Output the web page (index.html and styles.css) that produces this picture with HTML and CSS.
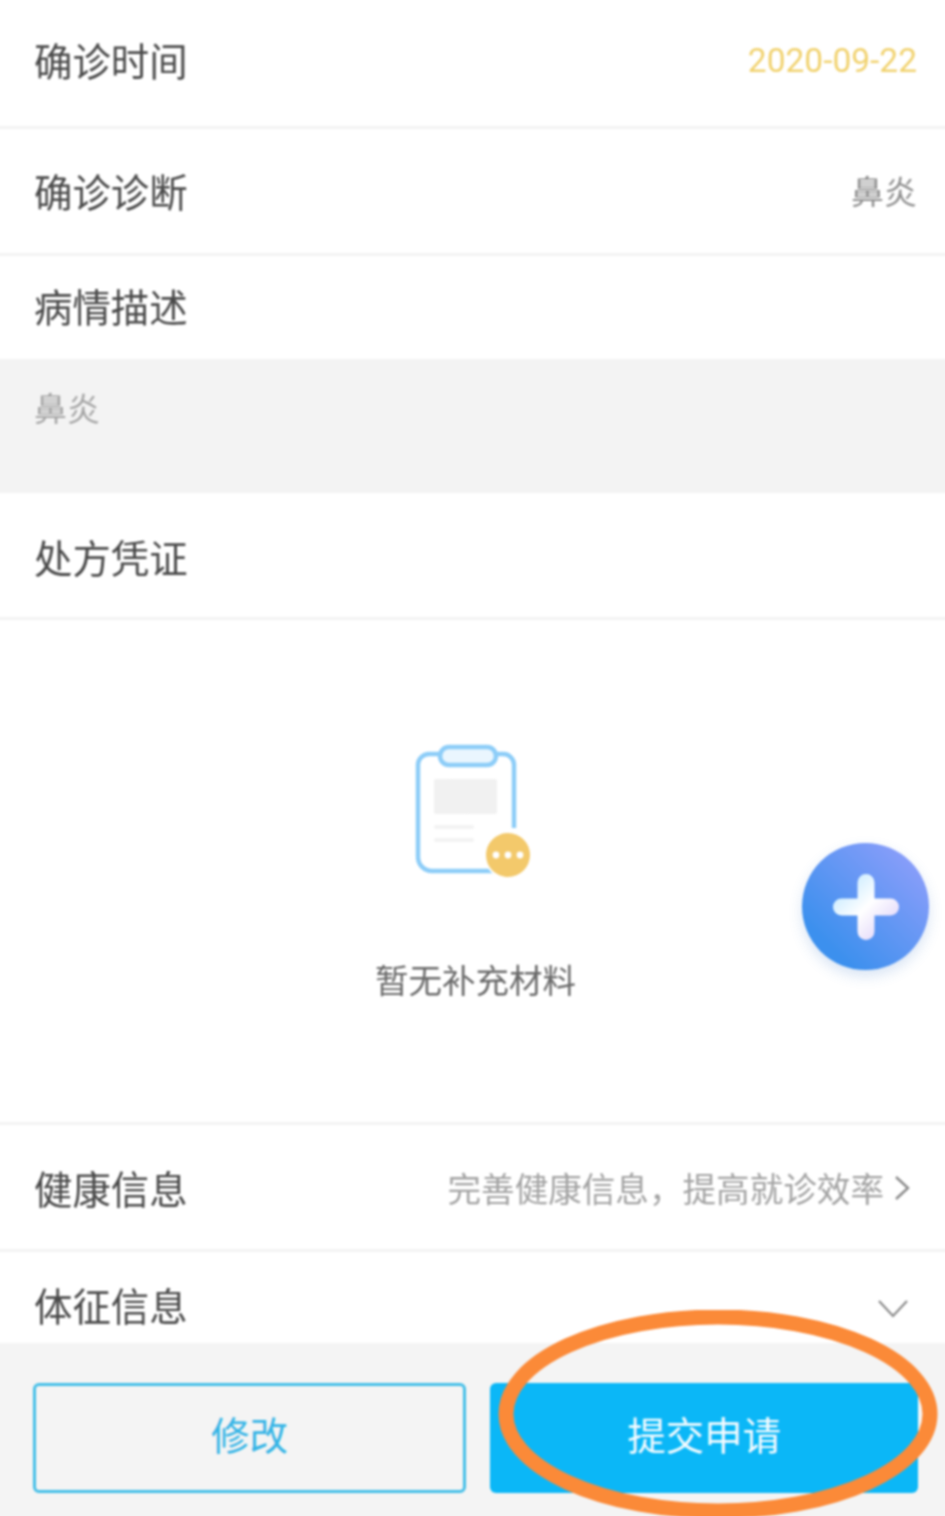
FILE: index.html
```html
<!DOCTYPE html>
<html>
<head>
    <meta charset="UTF-8">
    <meta name="viewport" content="width=device-width, initial-scale=1.0">
    <title>提交申请</title>
    <link rel="stylesheet" href="styles.css">
</head>
<body>
    <div class="page">
        <div class="row row-first">
            <span class="label">确诊时间</span>
            <span class="date">2020-09-22</span>
        </div>
        <div class="row row-second">
            <span class="label">确诊诊断</span>
            <span class="value">鼻炎</span>
        </div>
        <div class="row row-title">
            <span class="label">病情描述</span>
        </div>
        <div class="desc">鼻炎</div>
        <div class="row row-fourth">
            <span class="label">处方凭证</span>
        </div>

        <!-- Empty state -->
        <div class="empty">
            <svg class="empty-icon" width="120" height="138" viewBox="0 0 120 138">
                <path d="M24 10 H14 A11 11 0 0 0 3 21 V113 A14 14 0 0 0 17 127 H78" fill="#fff" stroke="#8dcdf8" stroke-width="4.5"/>
                <path d="M80 10 H88 A11 11 0 0 1 99 21 V84" fill="none" stroke="#8dcdf8" stroke-width="4.5"/>
                <rect x="25" y="3" width="56" height="18" rx="9" fill="#eaf6fe" stroke="#8dcdf8" stroke-width="4.5"/>
                <rect x="19" y="35" width="63" height="35" rx="2" fill="#f1f1f1"/>
                <rect x="19" y="81" width="40" height="4" rx="2" fill="#f3f3f3"/>
                <rect x="19" y="94" width="40" height="4" rx="2" fill="#f3f3f3"/>
                <circle cx="93" cy="111" r="24" fill="#fff"/>
                <circle cx="93" cy="111" r="22" fill="#f3c96b"/>
                <circle cx="81" cy="111" r="3.4" fill="#fff"/>
                <circle cx="93" cy="111" r="3.4" fill="#fff"/>
                <circle cx="105" cy="111" r="3.4" fill="#fff"/>
            </svg>
            <div class="empty-text">暂无补充材料</div>
        </div>

        <div class="row row-top">
            <span class="label">健康信息</span>
            <span class="value hint">完善健康信息，提高就诊效率
                <svg width="18" height="26" viewBox="0 0 18 26"><path d="M3 2 L15 13 L3 24" fill="none" stroke="#8a8a8a" stroke-width="2.4"/></svg>
            </span>
        </div>
        <div class="row row-last">
            <span class="label">体征信息</span>
            <svg class="chevron" width="32" height="20" viewBox="0 0 32 20"><path d="M2 2 L16 17 L30 2" fill="none" stroke="#8a8a8a" stroke-width="2.2"/></svg>
        </div>

        <div class="footer">
            <div class="btn btn-outline">修改</div>
            <div class="btn btn-fill">提交申请</div>
        </div>

        <!-- Floating add button -->
        <div class="fab">
            <svg width="68" height="68" viewBox="0 0 68 68">
                <defs>
                    <linearGradient id="plusGrad" x1="0" y1="0" x2="1" y2="1">
                        <stop offset="0.15" stop-color="#c9ebff"/>
                        <stop offset="0.5" stop-color="#ffffff"/>
                        <stop offset="0.85" stop-color="#e3d8fa"/>
                    </linearGradient>
                </defs>
                <path d="M34 1 a8.5 8.5 0 0 1 8.5 8.5 V25.5 H58.5 a8.5 8.5 0 0 1 0 17 H42.5 V58.5 a8.5 8.5 0 0 1 -17 0 V42.5 H9.5 a8.5 8.5 0 0 1 0 -17 H25.5 V9.5 a8.5 8.5 0 0 1 8.5 -8.5 Z" fill="url(#plusGrad)"/>
            </svg>
        </div>

        <!-- Hand-drawn annotation -->
        <svg class="circle-mark" width="460" height="220" viewBox="0 0 460 220">
            <ellipse cx="229" cy="104" rx="212" ry="97" fill="none" stroke="#fb8a38" stroke-width="15"/>
        </svg>
    </div>
</body>
</html>
```

FILE: styles.css
```css
* {
    box-sizing: border-box;
}

html, body {
    margin: 0;
    height: 100%;
    overflow: hidden;
    background: #fff;
}

/* 4px wider than the window each side so the blur doesn't fade at the edges */
.page {
    position: relative;
    width: 953px;
    height: 1520px;
    margin-left: -4px;
    overflow: hidden;
    display: flex;
    flex-direction: column;
    font-family: "Noto Sans CJK SC", "Noto Sans", sans-serif;
    color: #4a4a4a;
    filter: blur(1px);
}

.row {
    height: 127px;
    flex: none;
    padding: 0 32px 0 38px;
    display: flex;
    align-items: center;
    justify-content: space-between;
    border-bottom: 3px solid #f3f3f3;
}

.row-first {
    height: 129px;
    padding-bottom: 7px;
}

.row-second {
    padding-bottom: 2px;
}

.row-title {
    height: 103px;
    padding-bottom: 4px;
    border-bottom: 0;
}

.row-fourth {
    padding-top: 2px;
}

.row-top {
    border-top: 3px solid #f3f3f3;
    height: 130px;
}

.row-last {
    height: 91px;
    border-bottom: 0;
    padding-top: 13px;
    padding-right: 40px;
}

.chevron {
    margin-top: 10px;
}

.label {
    font-size: 38.4px;
    line-height: 1;
}

.date {
    font-family: Roboto, sans-serif;
    font-size: 33.5px;
    margin-top: 2px;
    color: #f1d26f;
}

.value {
    font-size: 33px;
    line-height: 1;
    color: #8f8f8f;
}

.hint {
    font-size: 33.6px;
    color: #a3a3a3;
    display: flex;
    align-items: center;
    gap: 9px;
    margin-top: 2px;
    margin-right: 6px;
}

.desc {
    height: 134px;
    flex: none;
    padding: 28px 38px 0;
    background: #f3f3f3;
    font-size: 33px;
    line-height: 40px;
    color: #a5a5a5;
}

.empty {
    height: 502px;
    flex: none;
    display: flex;
    flex-direction: column;
    align-items: center;
    padding-top: 124px;
}

.empty-icon {
    margin-left: 5px;
}

.empty-text {
    margin-top: 75px;
    margin-left: 6px;
    font-size: 33.5px;
    line-height: 44px;
    color: #6a6a6a;
}

.footer {
    height: 177px;
    flex: none;
    padding: 40px 0 0 37px;
    display: flex;
    gap: 24px;
    background: #f4f4f4;
}

.btn {
    height: 110px;
    padding-bottom: 10px;
    border-radius: 6px;
    display: flex;
    align-items: center;
    justify-content: center;
    font-size: 38.4px;
}

.btn-outline {
    width: 433px;
    border: 3px solid #45bfe8;
    color: #35b4e6;
}

.btn-fill {
    width: 428px;
    background: #0bb7f7;
    color: #f2fbff;
}

.fab {
    position: absolute;
    left: 806px;
    top: 843px;
    width: 127px;
    height: 127px;
    border-radius: 50%;
    background: linear-gradient(225deg, #929ffb 5%, #3c90ee 80%);
    box-shadow: 0 6px 14px rgba(60, 120, 200, 0.2);
    display: flex;
    align-items: center;
    justify-content: center;
}

.circle-mark {
    position: absolute;
    left: 493px;
    top: 1310px;
}
```
